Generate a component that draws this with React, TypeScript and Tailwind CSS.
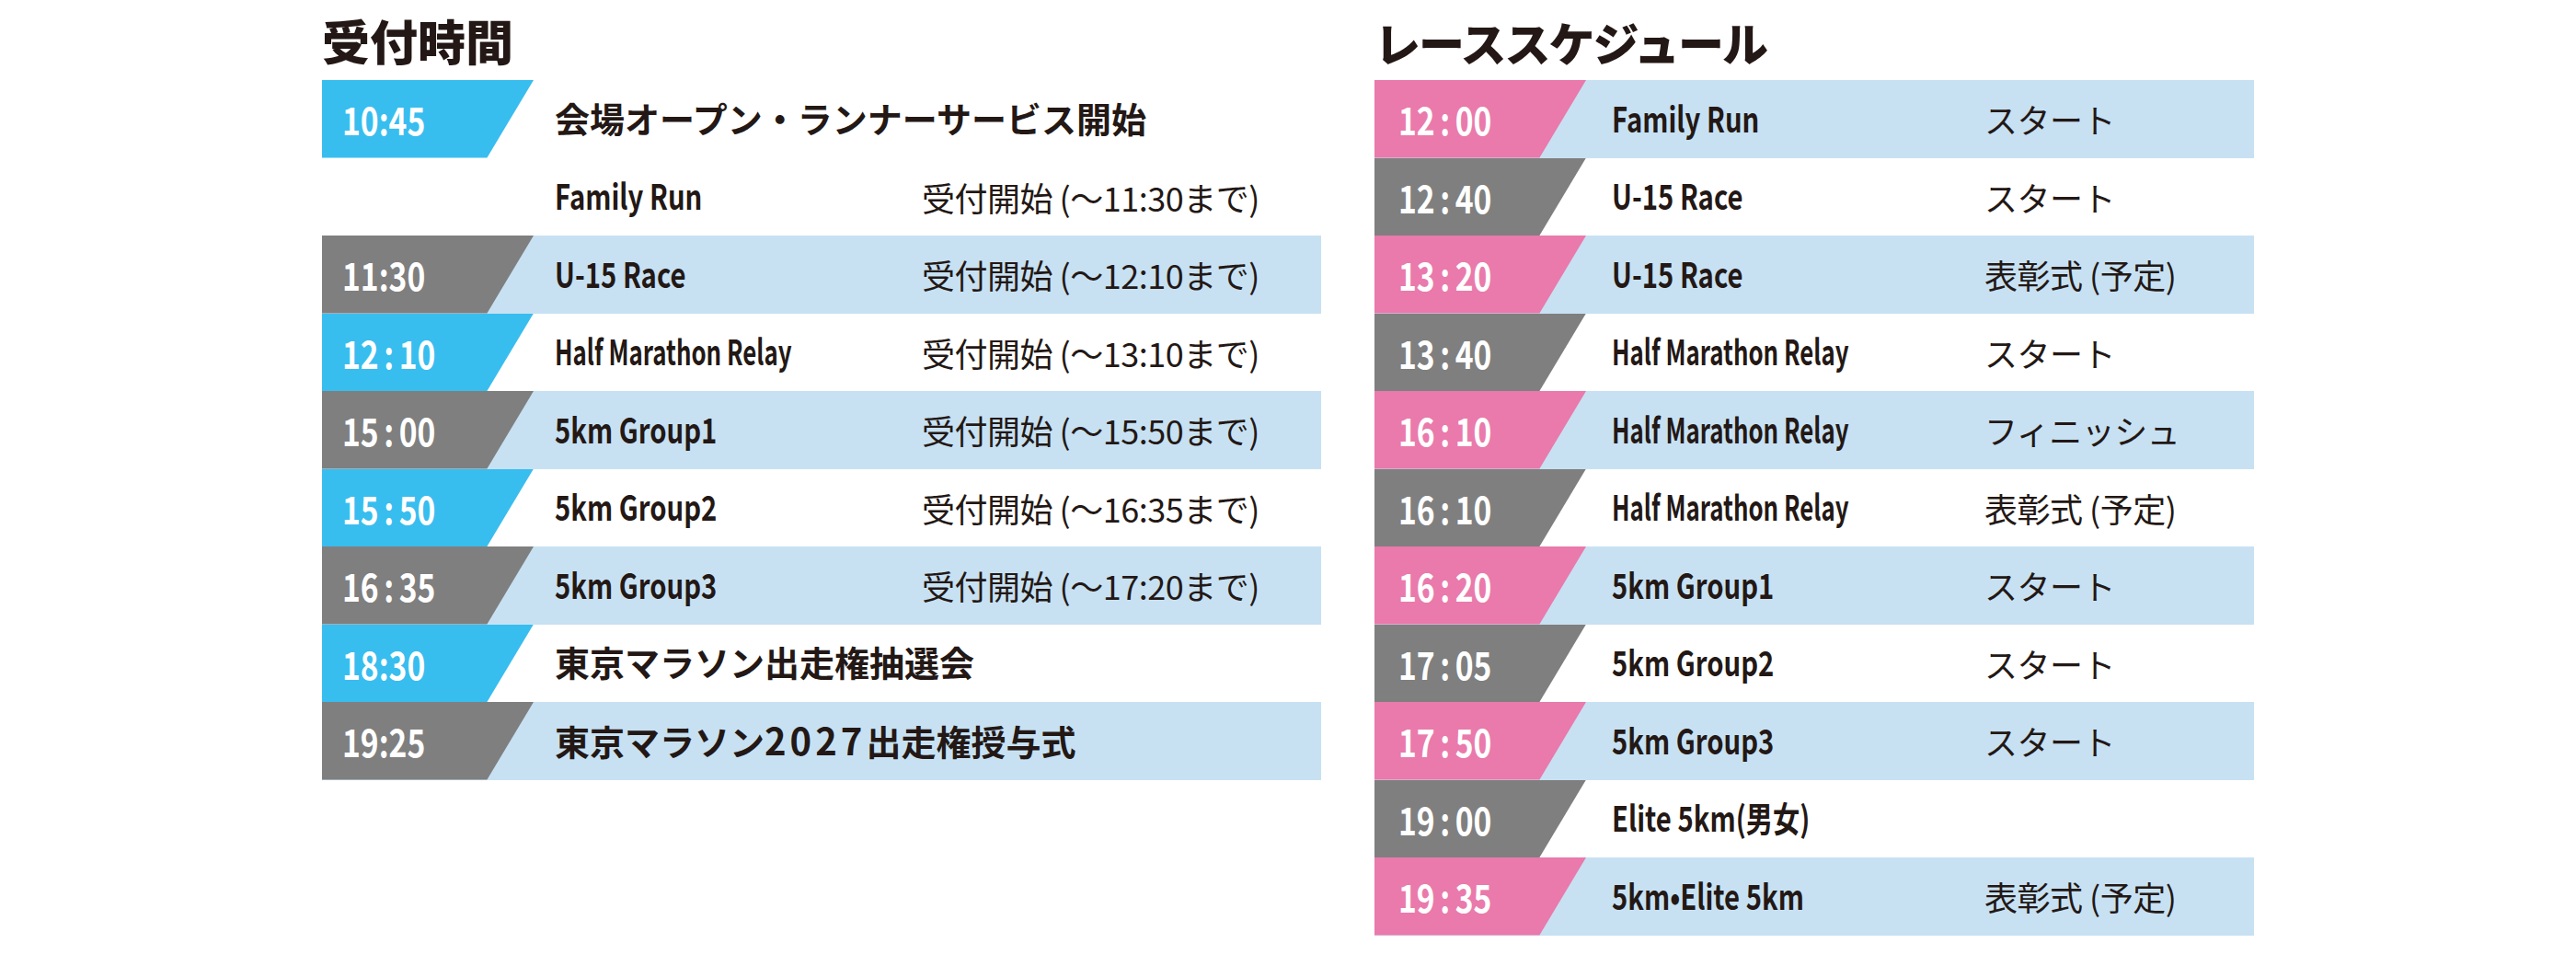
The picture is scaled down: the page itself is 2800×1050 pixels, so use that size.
type Row = {
  time?: string
  wide?: boolean
  badge?: 'blue' | 'gray' | 'pink'
  shaded?: boolean
  title: string
  jp?: boolean
  narrow?: boolean
  note?: string
}

const reception: Row[] = [
  { time: '10:45', badge: 'blue', title: '会場オープン・ランナーサービス開始', jp: true },
  { title: 'Family Run', note: '受付開始 (〜11:30まで)' },
  { time: '11:30', badge: 'gray', shaded: true, title: 'U-15 Race', note: '受付開始 (〜12:10まで)' },
  { time: '12:10', wide: true, badge: 'blue', title: 'Half Marathon Relay', narrow: true, note: '受付開始 (〜13:10まで)' },
  { time: '15:00', wide: true, badge: 'gray', shaded: true, title: '5km Group1', note: '受付開始 (〜15:50まで)' },
  { time: '15:50', wide: true, badge: 'blue', title: '5km Group2', note: '受付開始 (〜16:35まで)' },
  { time: '16:35', wide: true, badge: 'gray', shaded: true, title: '5km Group3', note: '受付開始 (〜17:20まで)' },
  { time: '18:30', badge: 'blue', title: '東京マラソン出走権抽選会', jp: true },
  { time: '19:25', badge: 'gray', shaded: true, title: '東京マラソン2027出走権授与式', jp: true },
]

const races: Row[] = [
  { time: '12:00', badge: 'pink', shaded: true, title: 'Family Run', note: 'スタート' },
  { time: '12:40', badge: 'gray', title: 'U-15 Race', note: 'スタート' },
  { time: '13:20', badge: 'pink', shaded: true, title: 'U-15 Race', note: '表彰式 (予定)' },
  { time: '13:40', badge: 'gray', title: 'Half Marathon Relay', narrow: true, note: 'スタート' },
  { time: '16:10', badge: 'pink', shaded: true, title: 'Half Marathon Relay', narrow: true, note: 'フィニッシュ' },
  { time: '16:10', badge: 'gray', title: 'Half Marathon Relay', narrow: true, note: '表彰式 (予定)' },
  { time: '16:20', badge: 'pink', shaded: true, title: '5km Group1', note: 'スタート' },
  { time: '17:05', badge: 'gray', title: '5km Group2', note: 'スタート' },
  { time: '17:50', badge: 'pink', shaded: true, title: '5km Group3', note: 'スタート' },
  { time: '19:00', badge: 'gray', title: 'Elite 5km(男女)' },
  { time: '19:35', badge: 'pink', shaded: true, title: '5km•Elite 5km', note: '表彰式 (予定)' },
].map((r) => ({ ...r, wide: true }))

const badgeColor = {
  blue: 'bg-[#38bdef]',
  gray: 'bg-[#7f7f7f]',
  pink: 'bg-[#e97aab]',
}

function Time({ time, wide }: { time: string; wide?: boolean }) {
  const [h, m] = time.split(':')
  return (
    <span className="inline-block origin-left scale-x-[0.8] font-['Noto_Sans_CJK_JP',sans-serif] font-bold text-[42px] leading-none text-white">
      {h}
      <span className={wide ? 'mx-[7px]' : ''}>:</span>
      {m}
    </span>
  )
}

function Title({ row }: { row: Row }) {
  if (row.jp) {
    return (
      <span className="font-['Noto_Sans_CJK_JP',sans-serif] font-bold text-[38px] leading-none">
        {row.title.split(/(\d+)/).map((part, i) =>
          /\d/.test(part) ? (
            <span key={i} className="text-[40px] tracking-[4px]">
              {part}
            </span>
          ) : (
            part
          ),
        )}
      </span>
    )
  }
  // condensed latin
  return (
    <span
      className={`inline-block origin-left font-['Noto_Sans_CJK_JP',sans-serif] font-bold text-[38px] leading-none ${
        row.narrow ? 'scale-x-[0.68]' : 'scale-x-[0.77]'
      }`}
    >
      {row.title}
    </span>
  )
}

function ScheduleRow({ row, pad, titleGap, titleWidth }: { row: Row; pad: string; titleGap: string; titleWidth: string }) {
  return (
    <div className={`flex items-center h-[84.5px] ${row.shaded ? 'bg-[#c7e1f3]' : 'bg-white'}`}>
      <div
        className={`h-full w-[230px] shrink-0 flex items-center ${pad} [clip-path:polygon(0_0,100%_0,78%_100%,0_100%)] ${
          row.badge ? badgeColor[row.badge] : ''
        }`}
      >
        {row.time && <Time time={row.time} wide={row.wide} />}
      </div>
      <div className={`${titleGap} ${titleWidth} shrink-0 text-[#231815] whitespace-nowrap`}>
        <Title row={row} />
      </div>
      {row.note && (
        <div className="font-['Noto_Sans_CJK_JP',sans-serif] text-[36px] leading-none text-[#231815] whitespace-nowrap tracking-[-0.5px]">
          {row.note}
        </div>
      )}
    </div>
  )
}

export default function App() {
  return (
    <div className="w-[2800px] h-[1050px] bg-white flex pl-[350px]">
      {/* 受付時間 */}
      <section className="w-[1086px] shrink-0">
        <h2 className="h-[87px] pt-[18px] font-['Noto_Sans_CJK_JP',sans-serif] font-black text-[52px] leading-none text-[#231815]">
          受付時間
        </h2>
        <div className="flex flex-col">
          {reception.map((row, i) => (
            <ScheduleRow key={i} row={row} pad="pl-[22px]" titleGap="ml-[23px]" titleWidth="w-[399px]" />
          ))}
        </div>
      </section>

      {/* レーススケジュール */}
      <section className="w-[956px] shrink-0 ml-[58px]">
        <h2 className="h-[87px] pt-[20px] font-['Noto_Sans_CJK_JP',sans-serif] font-black text-[50px] leading-none tracking-[-2px] text-[#231815]">
          レーススケジュール
        </h2>
        <div className="flex flex-col">
          {races.map((row, i) => (
            <ScheduleRow key={i} row={row} pad="pl-[26px]" titleGap="ml-[28px]" titleWidth="w-[405px]" />
          ))}
        </div>
      </section>
    </div>
  )
}
